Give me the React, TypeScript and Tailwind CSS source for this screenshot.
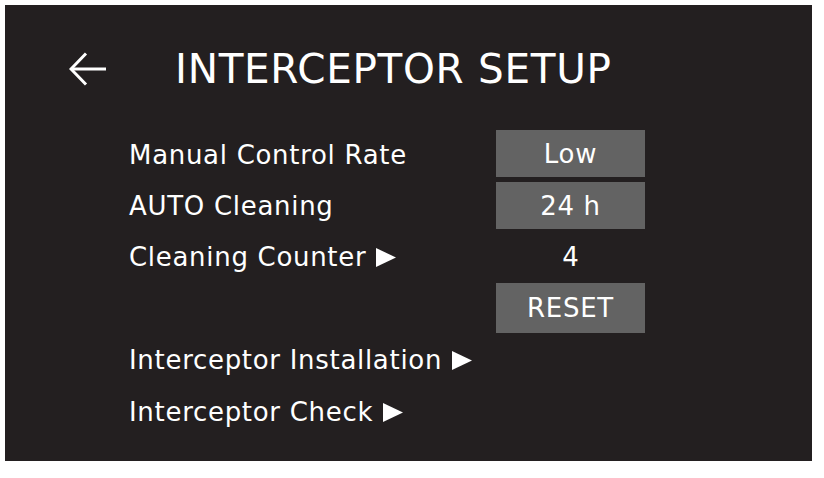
import React from "react";

const font = { fontFamily: '"DejaVu Sans", Verdana, sans-serif' };

function Tri() {
  return (
    <svg width="20" height="19" viewBox="0 0 20 19" className="ml-[10px] shrink-0">
      <polygon points="0,0 20,9.5 0,19" fill="#ffffff" />
    </svg>
  );
}

function Label({ text, arrow }: { text: string; arrow?: boolean }) {
  return (
    <div className="flex items-center pt-[3px] text-[26px] tracking-[0.7px] text-white whitespace-nowrap">
      <span>{text}</span>
      {arrow && <Tri />}
    </div>
  );
}

function Box({ text, h }: { text: string; h: string }) {
  return (
    <div className="flex items-center">
      <div className={`w-full ${h} bg-[#636363] flex items-center justify-center pt-[2px] text-[26px] tracking-[0.7px] text-white`}>
        {text}
      </div>
    </div>
  );
}

export default function App() {
  return (
    <div className="w-[824px] h-[478px] bg-white pt-[5px] pl-[5px]" style={font}>
      <div className="w-[807px] h-[456px] bg-[#231f20] pt-[29px]">
        <div className="flex items-center h-[70px]">
          <svg width="38" height="34" viewBox="0 0 38 34" className="ml-[64px]" fill="none" stroke="#ffffff" strokeWidth="3">
            <path d="M2 17 H37" />
            <path d="M17 1.5 L2 17 L17 32.5" strokeLinejoin="miter" />
          </svg>
          <h1 className="ml-[68px] text-[40.5px] text-white leading-none tracking-[0.7px]">INTERCEPTOR SETUP</h1>
        </div>

        <div className="grid grid-cols-[367px_149px] auto-rows-[51.4px] ml-[124px] mt-[24px]">
          <Label text="Manual Control Rate" />
          <Box text="Low" h="h-[47px]" />

          <Label text="AUTO Cleaning" />
          <Box text="24 h" h="h-[47px]" />

          <Label text="Cleaning Counter" arrow />
          <div className="flex items-center justify-center pt-[3px] text-[26px] text-white">4</div>

          <div />
          <Box text="RESET" h="h-[50px]" />

          <Label text="Interceptor Installation" arrow />
          <div />

          <Label text="Interceptor Check" arrow />
          <div />
        </div>
      </div>
    </div>
  );
}
